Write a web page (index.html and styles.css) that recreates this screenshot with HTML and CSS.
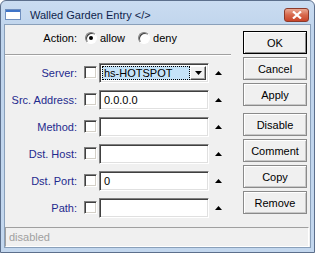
FILE: index.html
```html
<!DOCTYPE html>
<html lang="en">

<head>
	<title>Walled Garden Entry</title>
	<meta charset="UTF-8">
	<meta name="viewport" content="width=device-width, initial-scale=1.0">
	<link rel="stylesheet" href="styles.css">
</head>

<body>
	<div class="window">
		<div class="titlebar">
			<svg class="app-icon" width="16" height="11" viewBox="0 0 16 11">
				<rect x="0.5" y="0.5" width="15" height="10" fill="#fff" stroke="#6f8fbf"/>
				<rect x="1" y="1" width="14" height="2" fill="#3f74c8"/>
			</svg>
			<span class="title">Walled Garden Entry &lt;/&gt;</span>
			<div class="close-btn">
				<svg width="10" height="8" viewBox="0 0 10 8">
					<path d="M1 0.5 L9 7.5 M9 0.5 L1 7.5" stroke="#fff" stroke-width="2.2"/>
				</svg>
			</div>
		</div>

		<div class="client">
			<div class="main">
				<div class="form">
					<div class="action-row">
						<span class="label plain">Action:</span>
						<span class="radio checked"></span>
						<span class="radio-text">allow</span>
						<span class="radio"></span>
						<span class="radio-text">deny</span>
					</div>
					<div class="sep"></div>

					<div class="row">
						<span class="label">Server:</span>
						<span class="check"></span>
						<div class="field combo">
							<span class="selected">hs-HOTSPOT</span>
							<span class="drop-btn">
								<svg width="7" height="4" viewBox="0 0 7 4"><polygon points="0,0 7,0 3.5,4" fill="#000"/></svg>
							</span>
						</div>
						<svg class="up" width="7" height="4" viewBox="0 0 7 4"><polygon points="3.5,0 7,4 0,4" fill="#000"/></svg>
					</div>
					<div class="row">
						<span class="label">Src. Address:</span>
						<span class="check"></span>
						<div class="field">0.0.0.0</div>
						<svg class="up" width="7" height="4" viewBox="0 0 7 4"><polygon points="3.5,0 7,4 0,4" fill="#000"/></svg>
					</div>
					<div class="row">
						<span class="label">Method:</span>
						<span class="check"></span>
						<div class="field"></div>
						<svg class="up" width="7" height="4" viewBox="0 0 7 4"><polygon points="3.5,0 7,4 0,4" fill="#000"/></svg>
					</div>
					<div class="row">
						<span class="label">Dst. Host:</span>
						<span class="check"></span>
						<div class="field"></div>
						<svg class="up" width="7" height="4" viewBox="0 0 7 4"><polygon points="3.5,0 7,4 0,4" fill="#000"/></svg>
					</div>
					<div class="row">
						<span class="label">Dst. Port:</span>
						<span class="check"></span>
						<div class="field">0</div>
						<svg class="up" width="7" height="4" viewBox="0 0 7 4"><polygon points="3.5,0 7,4 0,4" fill="#000"/></svg>
					</div>
					<div class="row">
						<span class="label">Path:</span>
						<span class="check"></span>
						<div class="field"></div>
						<svg class="up" width="7" height="4" viewBox="0 0 7 4"><polygon points="3.5,0 7,4 0,4" fill="#000"/></svg>
					</div>
				</div>

				<div class="buttons">
					<div class="btn default">OK</div>
					<div class="btn">Cancel</div>
					<div class="btn">Apply</div>
					<div class="btn group-start">Disable</div>
					<div class="btn">Comment</div>
					<div class="btn">Copy</div>
					<div class="btn">Remove</div>
				</div>
			</div>

			<div class="statusbar">disabled</div>
		</div>
	</div>
</body>

</html>
```

FILE: styles.css
```css
* {
	box-sizing: border-box;
}

body {
	margin: 0;
	background-color: #fff;
	font-family: "Liberation Sans", Arial, sans-serif;
	font-size: 11px;
	color: #000;
}

.window {
	width: 315px;
	height: 253px;
	display: flex;
	flex-direction: column;
	padding: 0 3px 4px 3px;
	border: 1px solid #5c6f8c;
	border-radius: 6px 6px 0 0;
	background: linear-gradient(#cadcf1, #bfd4ec 30px, #c3d7ee);
}

.titlebar {
	height: 23px;
	display: flex;
	align-items: center;
	padding-top: 4px;
}

.app-icon {
	margin-left: 1px;
	margin-right: 9px;
}

.title {
	color: #0f1f4c;
}

.close-btn {
	margin-left: auto;
	margin-right: 2px;
	width: 25px;
	height: 14px;
	display: flex;
	align-items: center;
	justify-content: center;
	border: 1px solid #8c3a2a;
	border-radius: 3px;
	background: linear-gradient(#eaa994, #d7684c 50%, #c8452a);
}

.client {
	flex: 1;
	display: flex;
	flex-direction: column;
	background-color: #f0f0f0;
	border: 1px solid #8aa0ba;
}

.main {
	flex: 1;
	display: flex;
}

.form {
	width: 226px;
	padding-top: 3px;
}

.action-row {
	height: 20px;
	display: flex;
	align-items: center;
}

.label {
	width: 72px;
	margin-right: 7px;
	text-align: right;
	color: #1f2a8e;
}

.label.plain {
	color: #000;
}

.radio {
	width: 12px;
	height: 12px;
	margin-left: 1px;
	border-radius: 50%;
	border: 1px solid;
	border-color: #808080 #fff #fff #808080;
	background-color: #fff;
	box-shadow: inset 1px 1px #404040;
	position: relative;
}

.radio.checked::after {
	content: "";
	position: absolute;
	left: 3px;
	top: 3px;
	width: 4px;
	height: 4px;
	border-radius: 50%;
	background-color: #000;
}

.radio-text {
	margin-left: 3px;
	margin-right: 12px;
}

.sep {
	margin: 6px 0 3px 0;
	height: 2px;
	border-top: 1px solid #a0a0a0;
	border-bottom: 1px solid #fff;
}

.row {
	height: 27px;
	display: flex;
	align-items: center;
}

.check {
	width: 13px;
	height: 13px;
	margin-right: 2px;
	border: 1px solid;
	border-color: #808080 #fff #fff #808080;
	background-color: #fff;
	box-shadow: inset 1px 1px #404040, inset -1px -1px #d4d0c8;
}

.field {
	width: 110px;
	height: 20px;
	display: flex;
	align-items: center;
	padding-left: 4px;
	border: 1px solid;
	border-color: #808080 #fff #fff #808080;
	background-color: #fff;
	box-shadow: inset 1px 1px #404040, inset -1px -1px #e0e0e0;
}

.field.combo {
	padding: 2px;
}

.selected {
	flex: 1;
	height: 100%;
	padding-left: 1px;
	display: flex;
	align-items: center;
	background-color: #c5e3f8;
	border: 1px dotted #000;
}

.drop-btn {
	width: 16px;
	height: 100%;
	display: flex;
	align-items: center;
	justify-content: center;
	background-color: #f0f0f0;
	border: 1px solid;
	border-color: #fff #404040 #404040 #fff;
	box-shadow: inset -1px -1px #a0a0a0;
}

.up {
	margin-left: 6px;
}

.buttons {
	width: 64px;
	margin-left: auto;
	margin-right: 3px;
	padding-top: 6px;
}

.btn {
	height: 23px;
	margin-bottom: 3px;
	display: flex;
	align-items: center;
	justify-content: center;
	border: 1px solid #8a8a8a;
	background-color: #f0f0f0;
	box-shadow: inset 1px 1px #fff, inset -1px -1px #c8c8c8;
}

.btn.default {
	border-color: #000;
	box-shadow: inset 1px 1px #fff, inset -1px -1px #909090;
}

.btn.group-start {
	margin-top: 7px;
}

.statusbar {
	height: 20px;
	margin: 0 1px 0 0;
	padding-left: 3px;
	display: flex;
	align-items: center;
	color: #a0a0a0;
	border: 1px solid;
	border-color: #a0a0a0 #fff #fff #a0a0a0;
}
```
